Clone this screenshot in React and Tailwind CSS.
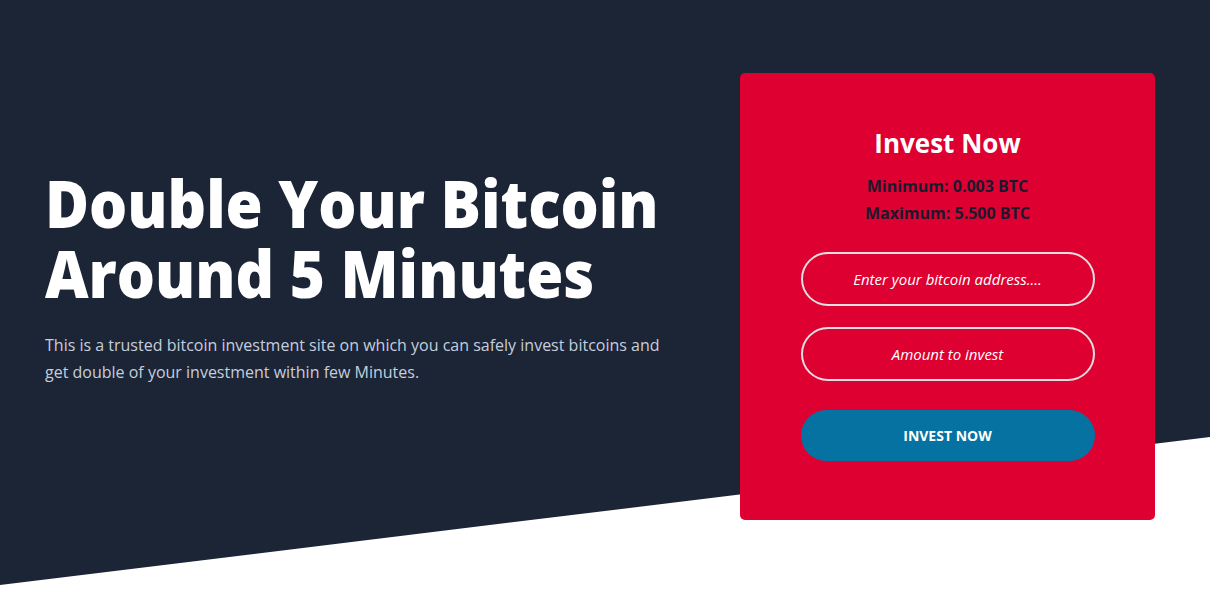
export default function App() {
  return (
    <div
      className="relative w-full h-[591px] overflow-hidden bg-[#1b2536]"
      style={{ fontFamily: '"Open Sans", "Noto Sans", sans-serif' }}
    >
      <div className="absolute inset-0 bg-white [clip-path:polygon(0_585px,100%_437px,100%_100%,0_100%)]" />
      <div className="relative flex items-start pl-[45px] pr-[55px]">
        <div className="w-[640px] pt-[167px]">
          <h1 className="text-[66px] leading-[70px] font-extrabold text-white whitespace-nowrap origin-left scale-x-[0.91]">
            Double Your Bitcoin
            <br />
            Around 5 Minutes
          </h1>
          <p className="mt-[25px] text-[16px] leading-[27px] text-[#c6cedd]">
            This is a trusted bitcoin investment site on which you can safely invest bitcoins and get double of your investment within few Minutes.
          </p>
        </div>
        <div className="ml-auto mt-[73px] w-[415px] h-[447px] rounded-[5px] bg-[#dd0031] flex flex-col items-center pt-[52px]">
          <h2 className="text-[26px] leading-[36px] font-bold text-white">Invest Now</h2>
          <div className="mt-[12px] text-center text-[16px] leading-[27px] font-bold text-[#1a1a2e]">
            <p>Minimum: 0.003 BTC</p>
            <p>Maximum: 5.500 BTC</p>
          </div>
          <div className="mt-[25px] flex flex-col gap-[21px]">
            <input
              className="w-[294px] h-[54px] rounded-full border-2 border-[#e6dfe1] bg-transparent text-center text-[15px] italic text-white placeholder:text-white outline-none"
              placeholder="Enter your bitcoin address...."
            />
            <input
              className="w-[294px] h-[54px] rounded-full border-2 border-[#e6dfe1] bg-transparent text-center text-[15px] italic text-white placeholder:text-white outline-none"
              placeholder="Amount to invest"
            />
          </div>
          <button className="mt-[29px] w-[294px] h-[51px] rounded-full bg-[#0672a1] text-white text-[14px] font-bold uppercase">
            Invest Now
          </button>
        </div>
      </div>
    </div>
  );
}
